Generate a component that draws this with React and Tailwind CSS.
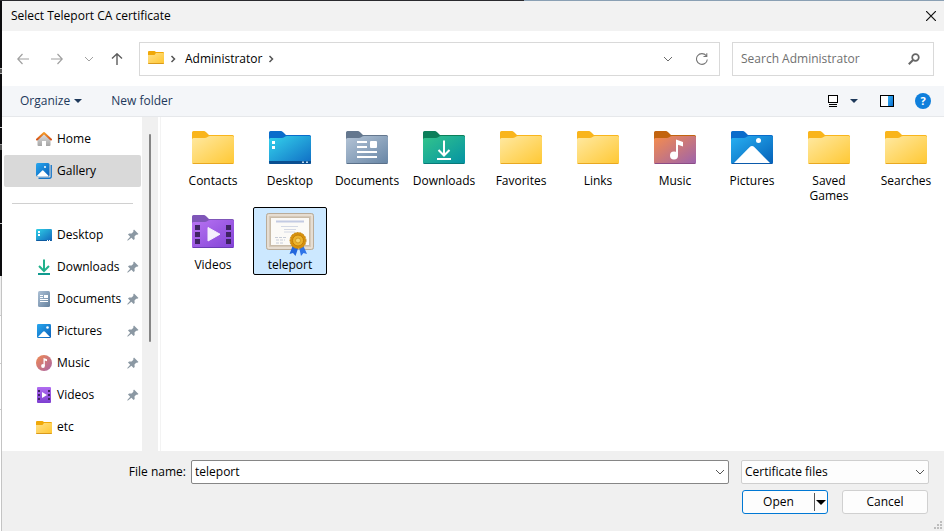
import { useState } from 'react'

const folderColors = {
  plain: { tab: '#f9b51c', edge: '#e9a820', from: '#ffe9a2', to: '#ffc833' },
  small: { tab: '#f0a808', edge: '#d99a1c', from: '#ffe08a', to: '#ffc62e' },
  desktop: { tab: '#0a6ccb', edge: '#0b4f96', from: '#35d3ec', to: '#0f6cc4' },
  documents: { tab: '#64778e', edge: '#5a7089', from: '#b4c4d6', to: '#6785a5' },
  downloads: { tab: '#0c7f5a', edge: '#087a78', from: '#33c48b', to: '#0492a4' },
  music: { tab: '#c2640f', edge: '#8b4c86', from: '#f68d4c', to: '#9c62ad' },
  pictures: { tab: '#0a6ccb', edge: '#0b5aab', from: '#27b0f2', to: '#0560b8' },
  videos: { tab: '#7f56b8', edge: '#6a3bb5', from: '#b873f2', to: '#8243d6' },
}

const folders = [
  { name: 'Contacts', kind: 'plain' },
  { name: 'Desktop', kind: 'desktop' },
  { name: 'Documents', kind: 'documents' },
  { name: 'Downloads', kind: 'downloads' },
  { name: 'Favorites', kind: 'plain' },
  { name: 'Links', kind: 'plain' },
  { name: 'Music', kind: 'music' },
  { name: 'Pictures', kind: 'pictures' },
  { name: 'Saved Games', kind: 'plain' },
  { name: 'Searches', kind: 'plain' },
  { name: 'Videos', kind: 'videos' },
  { name: 'teleport', kind: 'certificate' },
]

const places = [
  { name: 'Desktop', pinned: true },
  { name: 'Downloads', pinned: true },
  { name: 'Documents', pinned: true },
  { name: 'Pictures', pinned: true },
  { name: 'Music', pinned: true },
  { name: 'Videos', pinned: true },
  { name: 'etc', pinned: false },
]

function FolderMark({ kind }) {
  switch (kind) {
    case 'desktop':
      return (
        <>
          <path d="M0 30h42v1.5a1.5 1.5 0 0 1-1.5 1.5h-39A1.5 1.5 0 0 1 0 31.5z" fill="#0a4f91" />
          <path d="M3 10h3v3H3zM3 15h3v3H3z" fill="#fff" />
          <path d="M33 30.5h2v1.5h-2zM37 30.5h2v1.5h-2z" fill="#b9d9f2" />
        </>
      )
    case 'documents':
      return (
        <>
          <path d="M11 11h10M11 16h10M11 21h20M11 26h20" stroke="#fff" strokeWidth="2" />
          <rect x="24" y="10" width="7" height="7" rx="1" fill="#fff" />
        </>
      )
    case 'downloads':
      return <path d="M21 9.500v15M15.500 19l5.500 5.500 5.500-5.500M14 28h14" stroke="#fff" strokeWidth="2" fill="none" />
    case 'music':
      return (
        <>
          <path d="M22 8.500l7 2.500v4.500l-5-1.800V24h-2z" fill="#fff" />
          <circle cx="20" cy="24.500" r="4" fill="#fff" />
        </>
      )
    case 'pictures':
      return (
        <>
          <path d="M3 32L18.500 16.300a3.500 3.500 0 0 1 5 0L39 32z" fill="#fff" />
          <circle cx="27.500" cy="9.500" r="2.500" fill="#fff" />
        </>
      )
    case 'videos':
      return (
        <>
          <path d="M3 10h5v5H3zM3 17h5v5H3zM3 24h5v5H3zM34 10h5v5h-5zM34 17h5v5h-5zM34 24h5v5h-5z" fill="#3f2463" />
          <path d="M16 12.500v13.500l12-6.800z" fill="#f6effd" stroke="#f6effd" strokeLinejoin="round" />
        </>
      )
    default:
      return null
  }
}

function FolderIcon({ kind, id, className }) {
  const c = folderColors[kind]
  return (
    <svg viewBox="0 0 42 33" className={className} aria-hidden="true">
      <defs>
        <linearGradient id={id} x1="0" y1="0" x2="1" y2="1">
          <stop offset="0" stopColor={c.from} />
          <stop offset="1" stopColor={c.to} />
        </linearGradient>
      </defs>
      <path d="M0 1.500A1.500 1.500 0 0 1 1.500 0H11c1.500 0 2.400.4 3.200 1.200L17 4h23.500A1.500 1.500 0 0 1 42 5.500V12H0z" fill={c.tab} />
      <path d="M0 8.500A1.500 1.500 0 0 1 1.500 7H12c1.500 0 2.500-.4 3.500-1.100.8-.6 1.600-.9 2.700-.9h22.300A1.500 1.500 0 0 1 42 6.500v25a1.500 1.500 0 0 1-1.500 1.500h-39A1.500 1.500 0 0 1 0 31.500z" fill={`url(#${id})`} />
      <path d="M.500 32h41c-.2.700-.6 1-1 1h-39c-.6 0-.9-.4-1-1z" fill={c.edge} />
      <FolderMark kind={kind} />
    </svg>
  )
}

function SmallFolder({ id }) {
  const c = folderColors.small
  return (
    <svg viewBox="0 0 16 13" className="h-[13px] w-4" aria-hidden="true">
      <defs>
        <linearGradient id={id} x1="0" y1="0" x2="1" y2="1">
          <stop offset="0" stopColor={c.from} />
          <stop offset="1" stopColor={c.to} />
        </linearGradient>
      </defs>
      <path d="M0 1a1 1 0 0 1 1-1h5.500L8 1h7a1 1 0 0 1 1 1v3H0z" fill={c.tab} />
      <path d="M0 4h6.500L8 2h7.200a.8.8 0 0 1 .8.800V12a1 1 0 0 1-1 1H1a1 1 0 0 1-1-1z" fill={`url(#${id})`} />
      <path d="M0 12h16a1 1 0 0 1-1 1H1a1 1 0 0 1-1-1z" fill={c.edge} />
    </svg>
  )
}

function CertificateIcon() {
  return (
    <svg viewBox="0 0 50 44" className="h-11 w-[50px]" aria-hidden="true">
      <rect x="1.500" y="1.500" width="47" height="36" rx="2" fill="#d5c9b9" stroke="#b9ac9a" />
      <rect x="3" y="3" width="44" height="33" rx="1" fill="none" stroke="#ece4d9" strokeWidth="1.500" />
      <rect x="5.500" y="5.500" width="39" height="28" fill="#fbfaf7" stroke="#c9bca9" />
      <path d="M11 9.500h28" stroke="#c3cbe2" strokeWidth="2" />
      <path d="M16 14.500h17M19 17.500h12M19 20h11" stroke="#d3d8e4" />
      <path d="M10 25.500h11M11 28h9M11 31h8" stroke="#c6ccd8" strokeDasharray="3 1" />
      <path d="M28 33l-3.500 9 3.500-1 2.500 3 3-9z" fill="#2467dc" />
      <path d="M38 33l4 9-3.500-1-2.500 3-2-9z" fill="#2f74e8" />
      <circle cx="33" cy="28.500" r="8" fill="#d8920b" stroke="#c58512" strokeDasharray="2 1" />
      <circle cx="33" cy="28.500" r="5.500" fill="#edb32b" stroke="#c17e0b" />
      <circle cx="33" cy="28.500" r="2.500" fill="#f8d56c" stroke="#d39a20" />
    </svg>
  )
}

function PlaceIcon({ name }) {
  switch (name) {
    case 'Home':
      return (
        <svg viewBox="0 0 16 16" className="size-4" aria-hidden="true">
          <defs>
            <linearGradient id="home-wall" x1="0" y1="0" x2="0" y2="1">
              <stop offset="0" stopColor="#e3e3e3" />
              <stop offset="1" stopColor="#a5a5a5" />
            </linearGradient>
            <linearGradient id="home-roof" x1="0" y1="0" x2="0" y2="1">
              <stop offset="0" stopColor="#f59a26" />
              <stop offset="1" stopColor="#d45219" />
            </linearGradient>
          </defs>
          <path d="M8 2l6.500 6v6a1 1 0 0 1-1 1H10v-5H6v5H2.500a1 1 0 0 1-1-1V8z" fill="url(#home-wall)" />
          <path d="M1 8.500L8 2l7 6.500" stroke="url(#home-roof)" strokeWidth="2" strokeLinecap="round" strokeLinejoin="round" fill="none" />
        </svg>
      )
    case 'Gallery':
      return (
        <svg viewBox="0 0 16 16" className="size-4" aria-hidden="true">
          <defs>
            <linearGradient id="gallery-bg" x1="0" y1="0" x2="1" y2="1">
              <stop offset="0" stopColor="#28a8ef" />
              <stop offset="1" stopColor="#0b5fb9" />
            </linearGradient>
          </defs>
          <path d="M15.250 2v11.500a1.700 1.700 0 0 1-1.700 1.750H2.500" stroke="#1475c9" strokeWidth="1.300" fill="none" />
          <rect width="13.500" height="13.500" rx="1.500" fill="url(#gallery-bg)" />
          <path d="M1 12.700l5-5a1 1 0 0 1 1.500 0l5 5-.7.8H1.700z" fill="#fff" />
          <circle cx="9" cy="4" r="1" fill="#fff" />
        </svg>
      )
    case 'Desktop':
      return (
        <svg viewBox="0 0 16 16" className="size-4" aria-hidden="true">
          <defs>
            <linearGradient id="desktop-bg" x1="0" y1="0" x2="1" y2="1">
              <stop offset="0" stopColor="#2fd0e6" />
              <stop offset="1" stopColor="#1266bd" />
            </linearGradient>
          </defs>
          <rect y="2" width="16" height="12" rx="1.200" fill="url(#desktop-bg)" />
          <path d="M0 13h16a1 1 0 0 1-1 1H1a1 1 0 0 1-1-1z" fill="#0d5aa0" />
          <path d="M2 4h2v2H2zM2 7h2v2H2zM11 13h1v1h-1zM13 13h1v1h-1z" fill="#fff" />
        </svg>
      )
    case 'Downloads':
      return (
        <svg viewBox="0 0 16 16" className="size-4" fill="none" strokeWidth="2" aria-hidden="true">
          <path d="M8 .500v11M3 7l5 5 5-5" stroke="#22b28c" />
          <path d="M2 15h12" stroke="#109a8f" />
        </svg>
      )
    case 'Documents':
      return (
        <svg viewBox="0 0 16 16" className="size-4" aria-hidden="true">
          <defs>
            <linearGradient id="doc-bg" x1="0" y1="0" x2="1" y2="1">
              <stop offset="0" stopColor="#adc1d6" />
              <stop offset="1" stopColor="#64809d" />
            </linearGradient>
          </defs>
          <rect x="2" width="12" height="16" rx="1.500" fill="url(#doc-bg)" />
          <path d="M4 4.500h3M4 6.500h3M4 8.500h8M4 10.500h8" stroke="#fff" />
          <path d="M8 4h4v3H8z" fill="#fff" />
        </svg>
      )
    case 'Pictures':
      return (
        <svg viewBox="0 0 16 16" className="size-4" aria-hidden="true">
          <defs>
            <linearGradient id="pic-bg" x1="0" y1="0" x2="1" y2="1">
              <stop offset="0" stopColor="#28a8ef" />
              <stop offset="1" stopColor="#0b5fb9" />
            </linearGradient>
          </defs>
          <rect x="1" y="1" width="14" height="14" rx="1.200" fill="url(#pic-bg)" />
          <path d="M2 14l5-5.200a1.400 1.400 0 0 1 2 0L14 14z" fill="#fff" />
          <circle cx="11.500" cy="4.500" r="1.300" fill="#fff" />
        </svg>
      )
    case 'Music':
      return (
        <svg viewBox="0 0 16 16" className="size-4" aria-hidden="true">
          <defs>
            <linearGradient id="music-bg" x1="0" y1="0" x2="1" y2="1">
              <stop offset="0" stopColor="#f08a50" />
              <stop offset="1" stopColor="#a964a8" />
            </linearGradient>
          </defs>
          <circle cx="8" cy="8" r="8" fill="url(#music-bg)" />
          <path d="M7.500 3L11 4.200v2L8.800 5.500V11H7.500z" fill="#fff" />
          <circle cx="7" cy="11" r="1.900" fill="#fff" />
        </svg>
      )
    case 'Videos':
      return (
        <svg viewBox="0 0 16 16" className="size-4" aria-hidden="true">
          <defs>
            <linearGradient id="video-bg" x1="0" y1="0" x2="0" y2="1">
              <stop offset="0" stopColor="#b06cf0" />
              <stop offset="1" stopColor="#7d3fd0" />
            </linearGradient>
          </defs>
          <rect x="1" width="14" height="16" rx="1" fill="url(#video-bg)" />
          <path d="M2 3h2v2H2zM2 7h2v2H2zM2 11h2v2H2zM12 3h2v2h-2zM12 7h2v2h-2zM12 11h2v2h-2z" fill="#3f2463" />
          <path d="M6 5v6l5-3z" fill="#fff" />
        </svg>
      )
    default:
      return <SmallFolder id="place-folder" />
  }
}

function PinIcon() {
  return (
    <svg viewBox="0 0 12 12" className="size-3 shrink-0" aria-hidden="true">
      <path d="M7 .500L11.500 5l-1.300.8-1-.1-1.700 1.800.2 2.500-1.100 1-2.200-2.200L1 11.500H.300V11l2.900-3.300L1 5.400l1.100-1 2.500.1 1.800-1.700-.2-1z" fill="#8b98a3" />
    </svg>
  )
}

function Chevron({ className }) {
  return (
    <svg viewBox="0 0 10 10" className={className} fill="none" stroke="currentColor" aria-hidden="true">
      <path d="M1 3l4 4 4-4" />
    </svg>
  )
}

function Crumb() {
  return (
    <svg viewBox="0 0 6 8" className="h-2 w-1.5" fill="none" stroke="#555" strokeWidth="1.500" aria-hidden="true">
      <path d="M1.500 1l3 3-3 3" />
    </svg>
  )
}

function Caret({ className }) {
  return (
    <svg viewBox="0 0 8 4" className={className} fill="currentColor" aria-hidden="true">
      <path d="M0 0h8L4 4z" />
    </svg>
  )
}

function Place({ name, pinned, active }) {
  return (
    <a
      href="#"
      className={`flex h-8 items-center rounded-[2px] pl-8 pr-0.5 ${active ? 'bg-[#d9d9d9]' : ''}`}
    >
      <span className="flex w-4 justify-center">
        <PlaceIcon name={name} />
      </span>
      <span className="ml-[5px] flex-1">{name}</span>
      {pinned && <PinIcon />}
    </a>
  )
}

export default function App() {
  const [selected, setSelected] = useState('teleport')
  const [fileName, setFileName] = useState('teleport')

  const pick = (name) => {
    setSelected(name)
    setFileName(name)
  }

  return (
    <div className="flex h-screen flex-col overflow-hidden font-['Open_Sans',sans-serif] text-xs text-black">
      {/* sliver of the window behind the dialog */}
      <div className="flex h-px shrink-0">
        <div className="w-5/9 bg-[#2a2a2e]" />
        <div className="flex-1 bg-[#8aa0b4]" />
      </div>

      <div className="flex min-h-0 flex-1">
        <div className="flex w-0.5 shrink-0 flex-col">
          <div className="flex h-[275px] flex-col bg-[#0c0c0e] pt-[67px]">
            <div className="h-1.5 border-y border-[#b5b5b5] bg-[#555]" />
            <div className="mt-[53px] h-px bg-[#c8c8c8]" />
            <div className="mt-4 h-1.5 border-t border-[#999] bg-[#555]" />
            <div className="mt-[73px] h-px bg-[#c8c8c8]" />
          </div>
          <div className="flex flex-1 flex-col border-r border-[#c4c4c4] bg-white">
            <div className="h-10 border-b border-[#ccc] bg-[#f0f0f0]" />
            <div className="h-12 border-b border-[#ccc]" />
            <div className="h-[46px] border-b border-[#ccc]" />
          </div>
        </div>

        <div className="flex min-w-0 flex-1 flex-col bg-white">
          <header className="flex h-[30px] shrink-0 items-center justify-between bg-[#f2f2f2] pl-[9px] pr-2">
            <h1>Select Teleport CA certificate</h1>
            <button aria-label="Close">
              <svg viewBox="0 0 10 10" className="size-2.5" stroke="#111" strokeWidth="1.200" aria-hidden="true">
                <path d="M0 0l10 10M10 0L0 10" />
              </svg>
            </button>
          </header>

          <nav className="flex h-[55px] shrink-0 items-center pl-[3px] pr-2.5">
            <button aria-label="Back" className="flex w-9 justify-center text-[#a0a0a0]">
              <svg viewBox="0 0 12 12" className="size-3" fill="none" stroke="currentColor" strokeWidth="1.200" aria-hidden="true">
                <path d="M12 6H.800M5.500 1L.800 6l4.700 5" />
              </svg>
            </button>
            <button aria-label="Forward" className="flex w-8 justify-center text-[#a0a0a0]">
              <svg viewBox="0 0 12 12" className="size-3" fill="none" stroke="currentColor" strokeWidth="1.200" aria-hidden="true">
                <path d="M0 6h11.200M6.500 1l4.700 5-4.700 5" />
              </svg>
            </button>
            <button aria-label="Recent locations" className="flex w-8 justify-center text-[#a0a0a0]">
              <Chevron className="size-2.5" />
            </button>
            <button aria-label="Up" className="flex w-6 justify-center text-[#5c5c5c]">
              <svg viewBox="0 0 12 12" className="size-3" fill="none" stroke="currentColor" strokeWidth="1.400" aria-hidden="true">
                <path d="M6 12V.800M1 5.500L6 .800l5 4.700" />
              </svg>
            </button>

            <div className="ml-2.5 flex h-[34px] flex-1 items-center border border-[#d9d9d9] px-2">
              <span className="pb-0.5"><SmallFolder id="crumb-folder" /></span>
              <span className="ml-1.5"><Crumb /></span>
              <a href="#" className="ml-[9px] mr-1.5">Administrator</a>
              <Crumb />
              <button aria-label="Previous locations" className="ml-auto flex w-6 justify-center text-[#6b6b6b]">
                <Chevron className="size-2.5" />
              </button>
              <button aria-label="Refresh" className="ml-4 mr-[3px] text-[#777]">
                <svg viewBox="0 0 12 12" className="size-3" fill="none" stroke="currentColor" strokeWidth="1.100" aria-hidden="true">
                  <path d="M11.300 6.500A5.400 5.400 0 1 1 10.200 2.700M10.800.300v3.200H7.500" />
                </svg>
              </button>
            </div>

            <label className="ml-3 flex h-[34px] w-[202px] items-center border border-[#d9d9d9] pl-2 pr-[13px]">
              <input
                type="search"
                aria-label="Search Administrator"
                placeholder="Search Administrator"
                className="min-w-0 flex-1 outline-none placeholder:text-[#707070]"
              />
              <svg viewBox="0 0 12 12" className="size-3" fill="none" stroke="#666" aria-hidden="true">
                <circle cx="7.500" cy="4.500" r="3.300" strokeWidth="1.700" />
                <path d="M5 7L.800 11.200" strokeWidth="2" />
              </svg>
            </label>
          </nav>

          <div className="flex h-[31px] shrink-0 items-center border-b border-[#e6e8eb] bg-[#f4f6f9] pl-[18px] pr-[13px] text-[#1e395b]">
            <button className="flex items-center gap-1">
              Organize
              <Caret className="h-1 w-2" />
            </button>
            <button className="ml-[29px]">New folder</button>
            <button aria-label="Change your view" className="ml-auto">
              <svg viewBox="0 0 10 12" className="h-3 w-2.5" fill="none" stroke="#000" aria-hidden="true">
                <rect x=".500" y=".500" width="9" height="7" fill="#fff" />
                <path d="M1 9.500h8M1 11.500h8" />
              </svg>
            </button>
            <button aria-label="More view options" className="ml-3">
              <Caret className="h-1 w-2" />
            </button>
            <button aria-label="Preview pane" className="ml-[22px]">
              <svg viewBox="0 0 14 12" className="h-3 w-3.5" aria-hidden="true">
                <defs>
                  <linearGradient id="pane-bg" x1="0" y1="0" x2="1" y2="1">
                    <stop offset="0" stopColor="#35b0f5" />
                    <stop offset="1" stopColor="#0a6fd0" />
                  </linearGradient>
                </defs>
                <rect x=".500" y=".500" width="13" height="11" fill="#fff" stroke="#000" />
                <path d="M8 1h5v10H8z" fill="url(#pane-bg)" />
              </svg>
            </button>
            <button
              aria-label="Help"
              className="ml-[21px] flex size-4 items-center justify-center rounded-full bg-[#0f7fdc] text-[11px] font-bold text-white"
            >
              ?
            </button>
          </div>

          <div className="flex min-h-0 flex-1">
            <aside className="w-[140px] shrink-0 pl-0.5 pr-px pt-1.5">
              <Place name="Home" />
              <Place name="Gallery" active />
              <hr className="mx-2 my-4 -mb-px border-[#d0d0d0]" />
              <div className="mt-4">
                {places.map((p) => (
                  <Place key={p.name} {...p} />
                ))}
              </div>
            </aside>
            <div className="flex w-4 shrink-0 justify-center bg-[#f0f0f0] pt-[17px]">
              <div className="h-[208px] w-0.5 rounded-full bg-[#858585]" />
            </div>

            <main className="ml-0.5 flex flex-1 flex-wrap content-start gap-x-[3px] gap-y-4 border-l border-[#f3f3f3] pl-[15px] pt-1.5">
              {folders.map((f) => (
                <button
                  key={f.name}
                  onClick={() => pick(f.name)}
                  className={`flex h-[68px] w-[74px] flex-col items-center rounded-[2px] border ${
                    selected === f.name ? 'border-black bg-[#cce8ff]' : 'border-transparent'
                  }`}
                >
                  <span className="flex h-[49px] shrink-0 items-start justify-center">
                    {f.kind === 'certificate' ? (
                      <span className="pt-1"><CertificateIcon /></span>
                    ) : (
                      <FolderIcon kind={f.kind} id={`folder-${f.name.replace(' ', '-')}`} className="mt-[7px] h-[33px] w-[42px]" />
                    )}
                  </span>
                  <span className="w-[68px] text-center leading-[15px]">{f.name}</span>
                </button>
              ))}
            </main>
          </div>

          <footer className="relative flex h-20 shrink-0 flex-col gap-1.5 bg-[#f0f0f0] pt-[9px]">
            <div className="flex items-center pr-[15px]">
              <label htmlFor="file-name" className="w-[184px] text-right">File name:</label>
              <div className="ml-[5px] flex h-6 flex-1 items-center rounded-[2px] border border-[#868686] bg-white px-[3px]">
                <input
                  id="file-name"
                  value={fileName}
                  onChange={(e) => setFileName(e.target.value)}
                  className="min-w-0 flex-1 outline-none"
                />
                <button aria-label="Previous file names" className="text-[#555]">
                  <Chevron className="size-2.5" />
                </button>
              </div>
              <div className="relative ml-3 w-[188px]">
                <select
                  aria-label="File type"
                  className="block h-6 w-full appearance-none rounded-[2px] border border-[#cfcfcf] bg-[#fdfdfd] pl-[3px] outline-none"
                >
                  <option>Certificate files</option>
                </select>
                <Chevron className="pointer-events-none absolute right-1 top-[7px] size-2.5 text-[#555]" />
              </div>
            </div>

            <div className="flex justify-end gap-3.5 pr-4">
              <div className="flex h-6 w-[86px] items-center rounded-[3px] border border-[#0078d4] bg-[#fdfdfd]">
                <button className="flex-1">Open</button>
                <button aria-label="Open options" className="flex h-[18px] items-center border-l border-[#555] px-px">
                  <Caret className="h-[5px] w-2.5" />
                </button>
              </div>
              <button className="h-6 w-[86px] rounded-[3px] border border-[#d0d0d0] bg-[#fdfdfd]">Cancel</button>
            </div>

            <svg viewBox="0 0 8 8" className="absolute bottom-0.5 right-0.5 size-2" fill="#bdbdbd" aria-hidden="true">
              <path d="M6 0h2v2H6zM6 3h2v2H6zM6 6h2v2H6zM3 3h2v2H3zM3 6h2v2H3zM0 6h2v2H0z" />
            </svg>
          </footer>
        </div>
      </div>
    </div>
  )
}
